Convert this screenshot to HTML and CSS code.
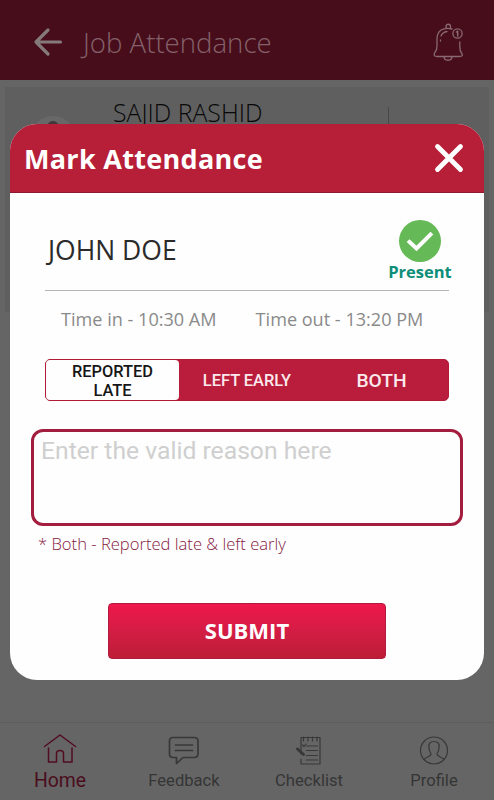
FILE: index.html
```html
<!DOCTYPE html>
<html lang="en">
<head>
<meta charset="utf-8">
<title>Job Attendance</title>
<link rel="stylesheet" href="styles.css">
</head>
<body>
<div class="screen">
  <header class="topbar">
    <svg class="back" width="30" height="30" viewBox="0 0 30 30"><path d="M15 3 3 15 15 27M3 15H27.500"/></svg>
    <h1 class="topbar-title">Job Attendance</h1>
    <svg class="bell" width="32" height="40" viewBox="0 0 32 40">
      <path d="M20 7C11 4.500 5 9 5 17V24C5 28.500 4 29 2.500 31C1.500 34 3 34.500 5 34.500H27C31 34.500 31 33 29.500 31C28 29 27.800 28 27.800 25V20M14 6V4.500C14 1.500 18.500 1.500 18.500 4.500V6M12 34.500C12 39.500 20 39.500 20 34.500M9 14C10 11.500 12 10 15 9.500M8.500 18V19"/>
      <circle cx="25.500" cy="11.500" r="4.600"/>
      <path class="one" d="M24.500 10 25.700 9.200V14"/>
    </svg>
  </header>
  <main class="content">
    <section class="card">
      <span class="avatar"><i class="hair"></i></span>
      <span class="card-name">SAJID RASHID</span>
      <span class="card-rule"></span>
    </section>
  </main>
  <nav class="tabs">
    <a class="tab tab-home">
      <svg width="34" height="32" viewBox="0 0 34 32"><path d="M1.500 13.500 17 2 32.500 13.500M5.500 15V29H13.500V20.500C13.500 16.500 20.500 16.500 20.500 20.500V29H29V15"/></svg>
      <span>Home</span>
    </a>
    <a class="tab tab-feedback">
      <svg width="34" height="32" viewBox="0 0 34 32"><path d="M6 4.500H27Q31 4.500 31 8V20.500Q31 24.500 27 24.500H16L9.500 30.500V24.500H6Q2.500 24.500 2.500 20.500V8Q2.500 4.500 6 4.500ZM8.500 12H25.500M8.500 17.500H25.500"/></svg>
      <span>Feedback</span>
    </a>
    <a class="tab tab-check">
      <svg width="34" height="32" viewBox="0 0 34 32"><path d="M9 21V4.500H28V31H9V26M11.500 4V8M16 4V8M20.500 4V8M25 4V8M14.500 13H25.500M14.500 17.500H25.500M14.500 22.500H25.500M14.500 27H25.500M10.500 12 12 13.500 14 11"/><path class="pen" d="M5.500 16 11.500 21.500"/></svg>
      <span>Checklist</span>
    </a>
    <a class="tab tab-profile">
      <svg width="34" height="32" viewBox="0 0 34 32"><circle cx="17" cy="17.500" r="13.500"/><path d="M7 26.500C8 24 14.500 24 14 20.500C12 18 12.200 17 12 14.500C11 10.500 13.500 8.500 17 8.500S23 10.500 22 14.500C21.800 17 22 18 20 20.500C19.500 24 26 24 27 26.500"/></svg>
      <span>Profile</span>
    </a>
  </nav>

  <div class="dialog">
    <div class="dialog-head">
      <h2>Mark Attendance</h2>
      <svg width="30" height="30" viewBox="0 0 30 30"><path d="M3.500 3.500 26.500 26.500M26.500 3.500 3.500 26.500"/></svg>
    </div>
    <div class="dialog-body">
      <div class="person">
        <span class="person-name">JOHN DOE</span>
        <div class="status">
          <svg width="42" height="42" viewBox="0 0 42 42"><circle cx="21" cy="21" r="21"/><path d="M10.500 22 17.500 28.500 31.500 14.500"/></svg>
          <span>Present</span>
        </div>
      </div>
      <div class="times"><span class="time-in">Time in - 10:30 AM</span><span class="time-out">Time out - 13:20 PM</span></div>
      <div class="segments">
        <span class="segment active">REPORTED<br>LATE</span>
        <span class="segment">LEFT EARLY</span>
        <span class="segment both">BOTH</span>
      </div>
      <div class="reason">Enter the valid reason here</div>
      <p class="note">* Both - Reported late &amp; left early</p>
      <button class="submit">SUBMIT</button>
    </div>
  </div>
</div>
</body>
</html>
```
FILE: styles.css
```css
* { box-sizing: border-box; }
body { margin: 0; }
h1, h2, p { margin: 0; }
svg { display: block; flex: none; fill: none; stroke-linecap: round; stroke-linejoin: round; }
span { white-space: nowrap; }

.screen {
  position: relative;
  display: flex;
  flex-direction: column;
  width: 494px;
  height: 800px;
  overflow: hidden;
  background: #656565;
  font-family: "Open Sans", sans-serif;
}
.topbar {
  display: flex;
  align-items: center;
  height: 80px;
  padding: 3px 30px 0 33px;
  background: #470d1b;
}
.back { stroke: #85797b; stroke-width: 3.2; }
.topbar-title {
  flex: 1;
  margin-left: 20px;
  color: #84616a;
  font-size: 27.600px;
  font-weight: 300;
  line-height: 40px;
}
.bell { stroke: #886871; stroke-width: 1.300; }
.bell .one { stroke-width: 1.500; }

.content { flex: 1; padding: 7px 5px 0; }
.card {
  display: flex;
  height: 225px;
  padding-left: 25px;
  background: #5f5f5f;
}
.avatar {
  display: flex;
  justify-content: center;
  width: 46px;
  height: 46px;
  margin-top: 29px;
  padding-top: 5px;
  border-radius: 50%;
  background: #686868;
}
.hair { width: 12px; height: 12px; border-radius: 50%; background: #403838; }
.card-name {
  width: 275px;
  margin-left: 37px;
  padding-top: 8px;
  color: #080808;
  font-size: 24.800px;
  font-weight: 300;
  line-height: 34px;
}
.card-rule { width: 1px; height: 60px; margin-top: 20px; background: #484848; }

.tabs {
  display: grid;
  grid-template-columns: 120px 128px 122px 128px;
  height: 78px;
  border-top: 1px solid #5d5d5d;
  color: #353535;
  font-family: Roboto, sans-serif;
  font-size: 16.600px;
}
.tab { display: flex; flex-direction: column; align-items: center; padding-top: 10px; line-height: 24px; }
.tab svg { stroke: #383838; stroke-width: 1.200; }
.tab span { margin-top: 4px; }
.tab-home { color: #4b0d1d; font-size: 19.400px; }
.tab-home svg { stroke: #520c20; stroke-width: 1.500; }
.tab-feedback svg { stroke-width: 1.700; }
.tab .pen { stroke-width: 3; }

.dialog {
  position: absolute;
  top: 124px;
  left: 10px;
  width: 474px;
  height: 556px;
  overflow: hidden;
  border-radius: 27px;
  background: #fefefe;
}
.dialog-head {
  display: flex;
  align-items: center;
  justify-content: space-between;
  height: 69px;
  padding: 0 20px 0 14px;
  border-bottom: 1px solid #8d1a31;
  background: #b71e37;
}
.dialog-head h2 { margin-top: 2px; color: #fff; font-size: 27px; font-weight: 700; letter-spacing: 0.3px; line-height: 40px; }
.dialog-head svg { stroke: #fff; stroke-width: 4.800; }
.dialog-body { padding: 0 21px; }
.person {
  display: flex;
  justify-content: space-between;
  height: 98px;
  margin: 0 14px;
  border-bottom: 1px solid #b5b5b5;
}
.person-name { padding: 38px 0 0 3px; color: #2b2b2b; font-size: 26.500px; line-height: 38px; }
.status {
  display: flex;
  flex-direction: column;
  align-items: center;
  width: 60px;
  margin-right: -1px;
  padding-top: 27px;
  color: #0e8e78;
  font-size: 16.500px;
  font-weight: 700;
  line-height: 20px;
}
.status svg { fill: #65b956; stroke: none; }
.status path { fill: none; stroke: #fff; stroke-width: 4; stroke-linecap: square; stroke-linejoin: miter; }
.times { display: flex; gap: 39px; padding: 15px 0 0 30px; color: #8a8a8a; font-size: 18.100px; line-height: 26px; }
.segments {
  display: grid;
  grid-template-columns: 133px 136px 1fr;
  align-items: center;
  height: 42px;
  margin: 27px 14px 0;
  border: 1px solid #b21b38;
  border-radius: 5px;
  background: #b91d3b;
  color: #fbe9ed;
  font-family: Roboto, sans-serif;
  font-size: 16.400px;
  font-weight: 500;
  line-height: 19px;
  text-align: center;
}
.segment.active { height: 40px; padding-top: 2px; border-radius: 4px; background: #fefefe; color: #161616; }
.segment.both { font-size: 19.200px; }
.reason {
  height: 97px;
  margin-top: 28px;
  padding: 4px 7px;
  border: 3px solid #a31d3f;
  border-radius: 12px;
  color: #cfcfcf;
  font-family: Roboto, sans-serif;
  font-size: 24.700px;
  line-height: 30px;
  white-space: nowrap;
}
.note { margin: 6px 0 0 7px; color: #84213f; font-size: 16.600px; font-weight: 300; line-height: 24px; }
.submit {
  display: block;
  width: 278px;
  height: 56px;
  margin: 47px 0 0 77px;
  padding: 0 0 2px;
  border: 1px solid #b21a40;
  border-radius: 4px;
  background: linear-gradient(#ee184b, #d11d43 55%, #bd1d37);
  color: #fff;
  font: 700 22px/52px "Open Sans", sans-serif;
}
```
